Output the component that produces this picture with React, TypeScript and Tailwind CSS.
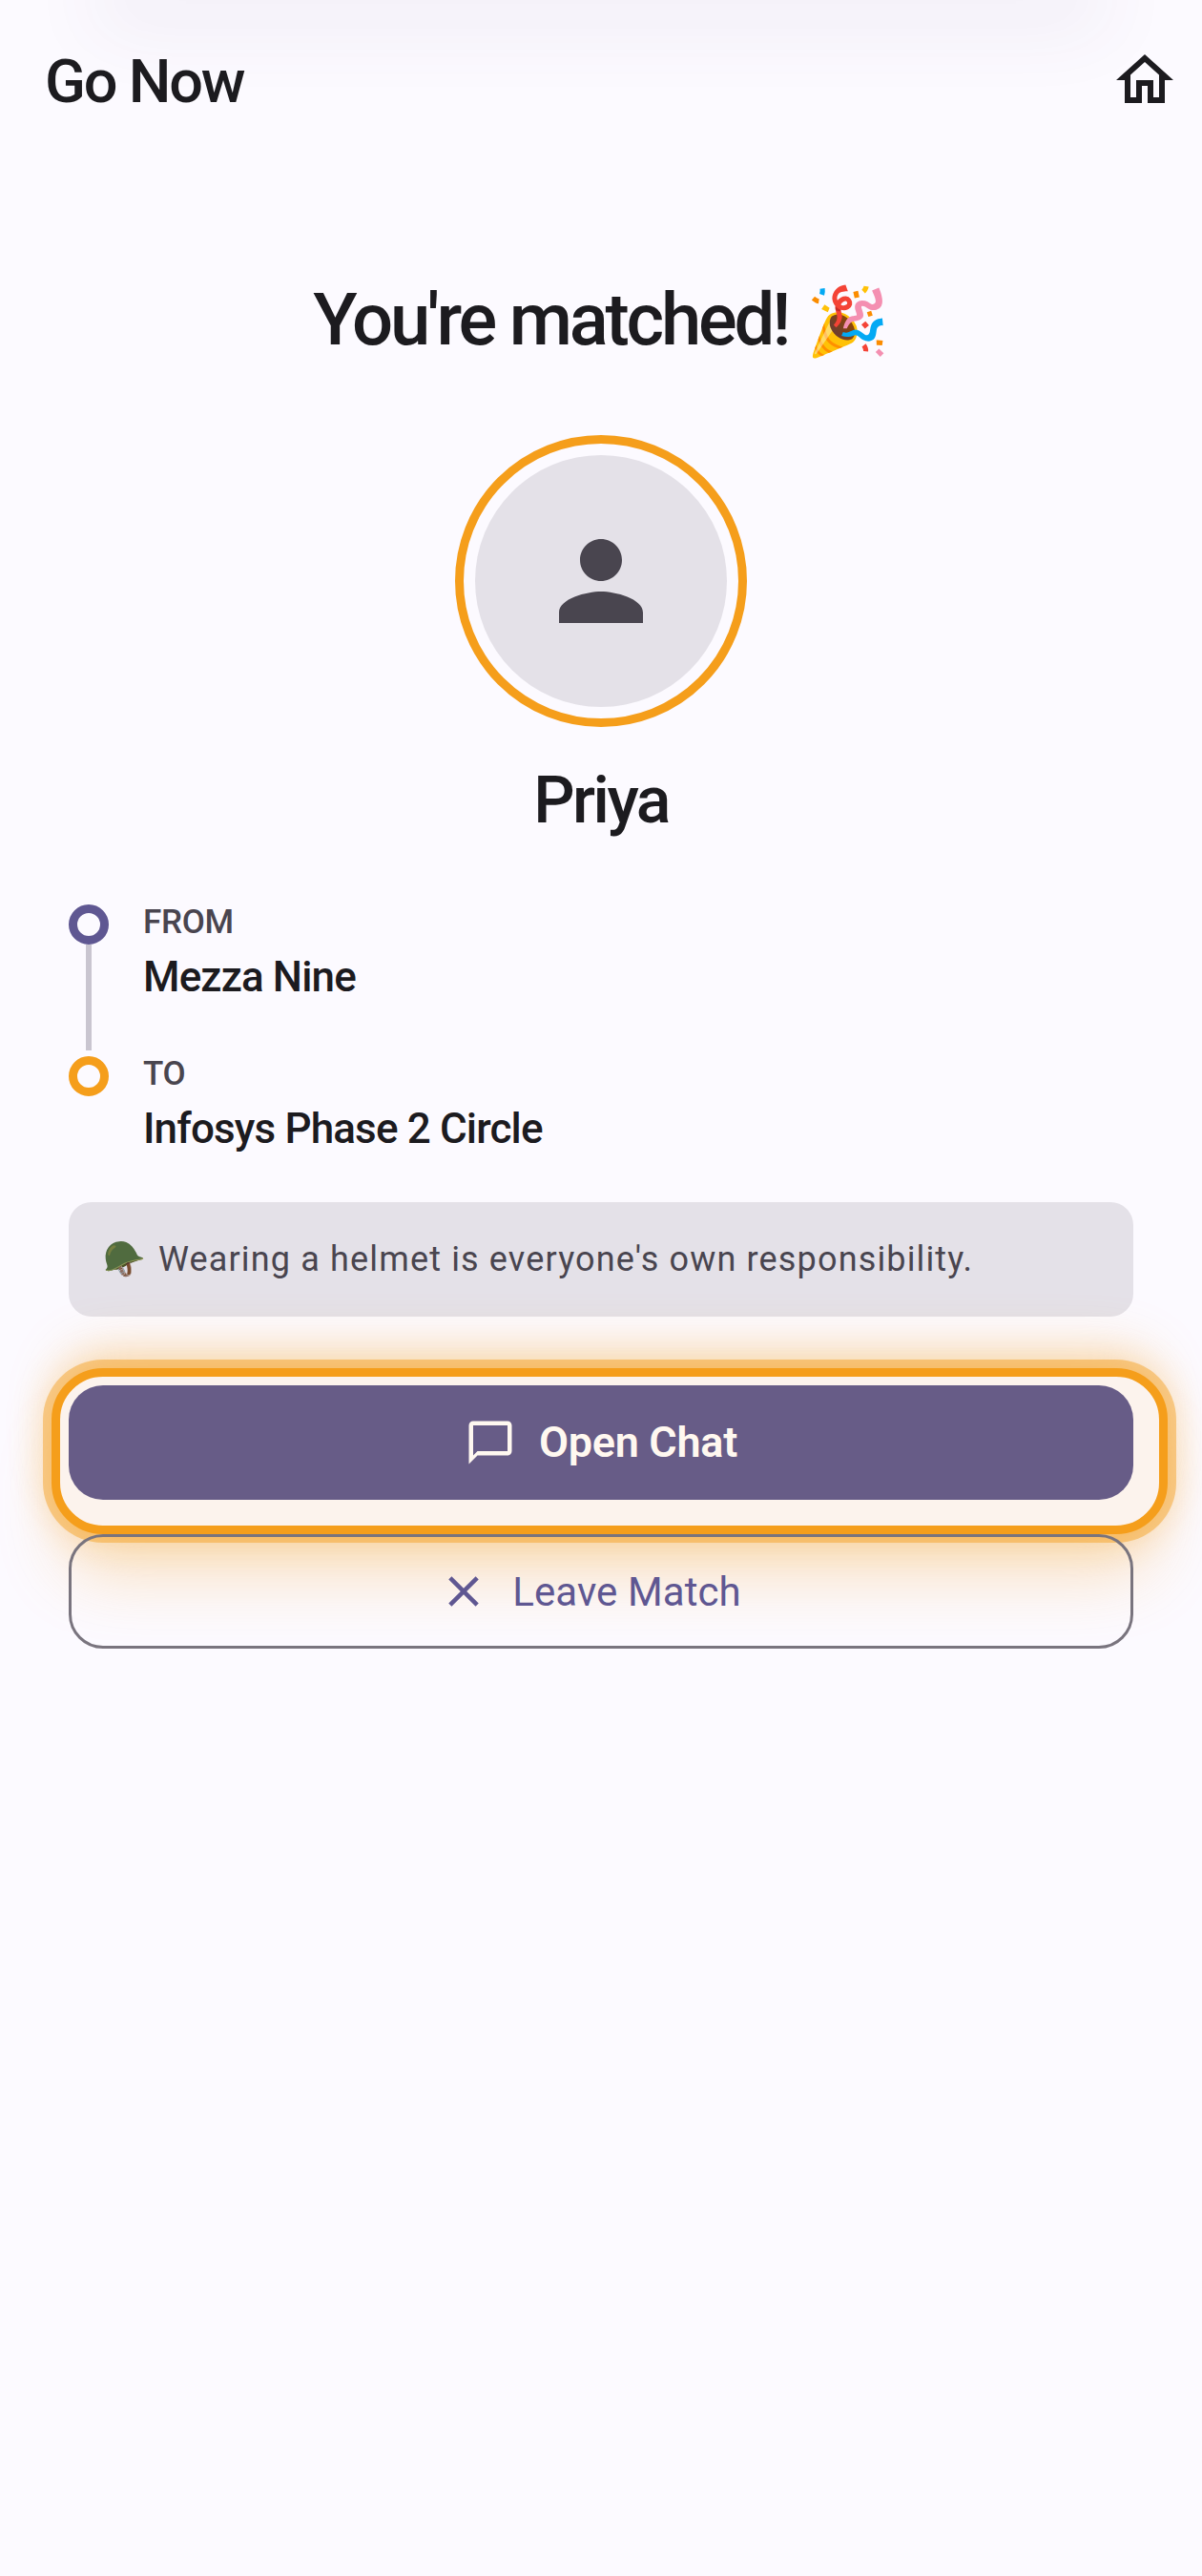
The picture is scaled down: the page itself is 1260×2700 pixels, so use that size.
function RouteStop({ label, place, ringClass, line }: { label: string; place: string; ringClass: string; line?: boolean }) {
  return (
    <div className={line ? "flex h-[159px] gap-[36px]" : "flex h-[153px] gap-[36px]"}>
      <div className="flex w-[42px] flex-col items-center">
        <div className={`h-[42px] w-[42px] shrink-0 rounded-full border-[9px] ${ringClass}`} />
        {line && <div className="h-[111px] w-[6px] bg-[#c9c5d0]" />}
      </div>
      <div className="pt-[1px]">
        <div className="text-[35px] leading-[36px] font-medium tracking-[-0.3px] text-[#49454f]">{label}</div>
        <div className="mt-[12px] text-[44px] leading-[54px] font-medium tracking-[-0.85px] text-[#1c1b1f]">{place}</div>
      </div>
    </div>
  );
}

export default function App() {
  return (
    <div className="relative min-h-[2700px] overflow-hidden bg-[#fcfaff] font-['Roboto','Noto_Sans',sans-serif] text-[#1c1b1f]">
      <div className="mx-[130px] h-0 shadow-[0_0_80px_30px_rgba(80,60,120,0.07)]" />

      <header className="flex items-center justify-between pt-[48px] pr-[24px] pl-[47px]">
        <h1 className="pt-[4px] text-[63px] leading-[68px] font-medium tracking-[-2.2px]">Go Now</h1>
        <svg viewBox="0 0 24 24" className="h-[72px] w-[72px] fill-[#1c1b1f]">
          <path d="M12 5.69l5 4.5V18h-2v-6H9v6H7v-7.81l5-4.5M12 3L2 12h3v8h6v-6h2v6h6v-8h3L12 3z" />
        </svg>
      </header>

      <main className="flex flex-col px-[72px]">
        <h2 className="mt-[167px] text-center text-[76px] leading-[96px] font-medium tracking-[-3.2px]">
          You're matched! <span className="ml-[3px] text-[70px] tracking-normal">🎉</span>
        </h2>

        <div className="mt-[71px] flex h-[306px] w-[306px] items-center justify-center self-center rounded-full border-[9px] border-[#f59e1b]">
          <div className="flex h-[264px] w-[264px] items-center justify-center rounded-full bg-[#e4e1e8]">
            <svg viewBox="0 0 24 24" className="h-[132px] w-[132px] fill-[#49454f]">
              <path d="M12 12c2.21 0 4-1.79 4-4s-1.79-4-4-4-4 1.79-4 4 1.79 4 4 4zm0 2c-2.67 0-8 1.34-8 4v2h16v-2c0-2.66-5.33-4-8-4z" />
            </svg>
          </div>
        </div>

        <div className="mt-[35px] text-center text-[68px] leading-[84px] font-medium tracking-[-2.5px]">Priya</div>

        <div className="mt-[67px]">
          <RouteStop label="FROM" place="Mezza Nine" ringClass="border-[#5f5792]" line />
          <RouteStop label="TO" place="Infosys Phase 2 Circle" ringClass="border-[#f59e1b]" />
        </div>

        <div className="flex h-[120px] items-center gap-[13px] rounded-[24px] bg-[#e4e1e8] pl-[36px] text-[#49454f]">
          <span className="text-[36px] leading-[48px]">🪖</span>
          <span className="text-[36px] leading-[48px] tracking-[1.15px]">Wearing a helmet is everyone's own responsibility.</span>
        </div>

        <div className="mt-[54px] -mr-[36px] -ml-[18px] rounded-[54px] border-[9px] border-[#f59e1b] bg-[#fcf3ed] pt-[9px] pr-[27px] pb-[27px] pl-[9px] shadow-[0_0_0_9px_rgba(245,158,27,0.45),0_0_36px_8px_rgba(245,158,27,0.24),0_55px_70px_-15px_rgba(245,158,27,0.3),0_-30px_60px_-15px_rgba(245,158,27,0.3)]">
          <button className="flex h-[120px] w-full items-center justify-center gap-[24px] rounded-[36px] bg-[#675c87] text-[45px] font-semibold tracking-[-0.3px] text-[#fff8f0]">
            <svg viewBox="0 0 24 24" className="h-[54px] w-[54px] fill-[#fff8f0]">
              <path d="M20 2H4c-1.1 0-2 .9-2 2v18l4-4h14c1.1 0 2-.9 2-2V4c0-1.1-.9-2-2-2zm0 14H6l-2 2V4h16v12z" />
            </svg>
            Open Chat
          </button>
        </div>

        <button className="relative flex h-[120px] w-full items-center justify-center gap-[24px] rounded-[36px] border-[3px] border-[#79747e] pr-[24px] text-[42px] tracking-[0.1px] text-[#5f5792]">
          <svg viewBox="0 0 24 24" className="h-[54px] w-[54px] fill-[#5f5792]">
            <path d="M19 6.41L17.59 5 12 10.59 6.41 5 5 6.41 10.59 12 5 17.59 6.41 19 12 13.41 17.59 19 19 17.59 13.41 12z" />
          </svg>
          Leave Match
        </button>
      </main>
    </div>
  );
}
